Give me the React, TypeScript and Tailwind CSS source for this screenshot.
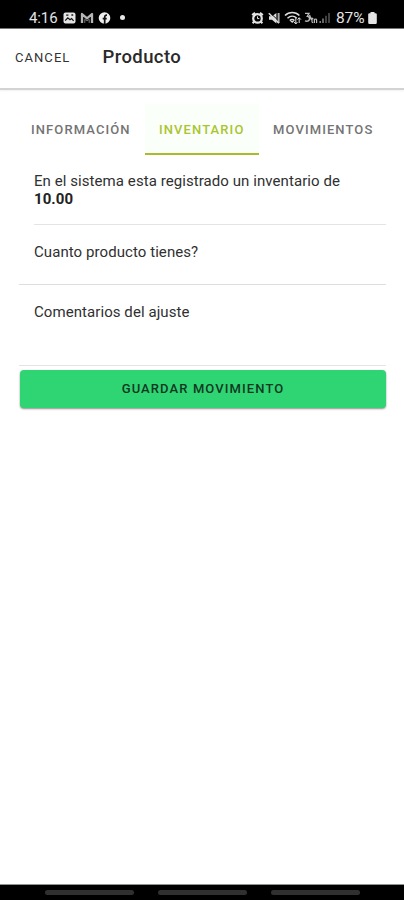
import React from "react";

function StatusBar() {
  return (
    <div className="flex h-[29px] shrink-0 items-start border-b border-[#777] bg-black pl-[29px] pr-[27px] pt-[8px] text-[#e4e4e4]">
      <span className="w-[30px] text-[15px] leading-[20px] tracking-[-0.1px]">4:16</span>
      <svg className="ml-[4px] mt-[4px]" width="13" height="12" viewBox="0 0 13 12">
        <rect x="0.5" y="0.5" width="12" height="11" rx="2" fill="#e4e4e4" />
        <path d="M2.2 8.6 4.8 5.8 7 7.8l1.6-1.3 2 2.3" fill="none" stroke="#111" strokeWidth="1.2" />
        <path d="M3.2 3.2h2.2M8.4 3h1.8" stroke="#111" strokeWidth="1.3" />
      </svg>
      <svg className="ml-[4px] mt-[4px]" width="14" height="12" viewBox="0 0 14 12">
        <path d="M2 11V2l5 4.3L12 2v9" fill="none" stroke="#b5b5b5" strokeWidth="2.3" strokeLinejoin="round" />
        <path d="M4.8 11V7.2L7 9l2.2-1.8V11" fill="none" stroke="#777" strokeWidth="1" />
      </svg>
      <svg className="ml-[4px] mt-[4px]" width="13" height="12" viewBox="0 0 13 12">
        <circle cx="6.5" cy="6" r="5.8" fill="#eee" />
        <path d="M6.7 12V5.2c0-1.5.7-2.2 2.3-2.1M4.7 6.7h4" fill="none" stroke="#111" strokeWidth="1.7" />
      </svg>
      <span className="ml-[9px] mt-[7px] h-[5px] w-[5px] rounded-full bg-[#e8e8e8]" />
      <div className="flex-1" />
      <svg className="mt-[4px]" width="13" height="12" viewBox="0 0 12 12">
        <circle cx="6" cy="6.4" r="4.3" fill="none" stroke="#e4e4e4" strokeWidth="2.2" />
        <path d="M.6 3 3.5.9M11.4 3 8.5.9M2.8 9.5l-1.7 1.8M9.2 9.5l1.7 1.8" stroke="#e4e4e4" strokeWidth="2" />
        <path d="M6 4.4v2.2h1.8" fill="none" stroke="#e4e4e4" strokeWidth="1" />
      </svg>
      <svg className="ml-[4px] mt-[4px]" width="13" height="12" viewBox="0 0 13 12">
        <path d="M1 4.3h3L8.4 1v10.5L4 7.7H1z" fill="#ddd" />
        <path d="M10.6 1v10" stroke="#aaa" strokeWidth="2" />
        <path d="M1.6.4 8.5 6.8" stroke="#000" strokeWidth="1" />
        <path d="M.8 1.2 11 11.2" stroke="#ddd" strokeWidth="1.5" />
      </svg>
      <svg className="ml-[3px] mt-[3px]" width="18" height="14" viewBox="0 0 18 14">
        <path d="M1 4.6C5 .5 11.4.5 15.4 4.6M3.5 7.2c2.8-2.6 6.6-2.6 9.3 0M5.8 9.6c1.4-1.3 3.3-1.3 4.6 0" fill="none" stroke="#ddd" strokeWidth="1.5" />
        <path d="m8.2 12-2-2h4z" fill="#ddd" />
        <path d="M11.8 7v6m-1.8-2 1.8 2 1.6-2M15.2 12V6.8m-1.7 1.8 1.7-1.8 1.7 1.8" fill="none" stroke="#ddd" strokeWidth="1" />
      </svg>
      <svg className="ml-[2px] mt-[4px]" width="14" height="12" viewBox="0 0 14 12">
        <path d="M1 1.4h4L3.3 4.3c2.8 0 3 4.3.2 4.9-1 .2-1.8 0-2.5-.5M5.5 3l2 5" fill="none" stroke="#bbb" strokeWidth="1.3" />
        <path d="M8 5.5v4q0 1.2 1.2 1.2M6.9 6.7h2.4M10.4 10.9V6.8M10.4 8q1.8-2 2.2 0v2.9" fill="none" stroke="#bbb" strokeWidth="1.2" />
      </svg>
      <svg className="ml-[1px] mt-[4px]" width="12" height="12" viewBox="0 0 12 12">
        <path d="M1.2 11V9M4 11V6.5" stroke="#888" strokeWidth="1.5" />
        <path d="M7 11V3.8M10 11V1" stroke="#555" strokeWidth="1.5" />
      </svg>
      <span className="ml-[5px] w-[32px] whitespace-nowrap text-[15.5px] leading-[20px] tracking-[-0.1px]">87%</span>
      <svg className="mt-[4px]" width="9" height="12" viewBox="0 0 9 12">
        <path d="M2.5 0h4v1.3H7.6q1.2 0 1.2 1.2v8.2q0 1.2-1.2 1.2H1.4Q.2 11.9.2 10.7V2.5q0-1.2 1.2-1.2h1.1z" fill="#e4e4e4" />
      </svg>
    </div>
  );
}

function Header() {
  return (
    <header className="flex h-[61px] shrink-0 items-center border-b-2 border-[#d3d3d3] pl-[15px] shadow-[0_1px_2px_rgba(0,0,0,0.06)]">
      <button className="w-[87.5px] pb-px text-left text-[13px] tracking-[1.05px] text-[#333]">CANCEL</button>
      <h1 className="pb-px text-[18.5px] font-medium tracking-[0.4px] text-[#2a2a2a]">Producto</h1>
    </header>
  );
}

function Tabs() {
  return (
    <nav className="mt-[14px] flex h-[51px] shrink-0 pl-[17px] text-[13px] font-medium text-[#747474]">
      <button className="w-[128px] whitespace-nowrap pl-[14px] text-left tracking-[1.1px]">INFORMACIÓN</button>
      <button className="w-[114px] whitespace-nowrap border-b-2 border-[#a9bd2c] bg-[#fbfffa] pl-[14px] pt-[2px] text-left tracking-[1.1px] text-[#a9c52f]">INVENTARIO</button>
      <button className="whitespace-nowrap pl-[14px] text-left tracking-[1.1px]">MOVIMIENTOS</button>
    </nav>
  );
}

export default function App() {
  return (
    <div className="flex h-[900px] w-[404px] flex-col overflow-hidden bg-white font-['Roboto',sans-serif]">
      <StatusBar />
      <Header />
      <Tabs />
      <main className="flex flex-1 flex-col pl-[19px] pr-[18px] text-[15px] leading-[18px] tracking-[0.07px] text-[#303030]">
        <div className="ml-[15px] h-[70px] border-b border-[#e4e4e4] pt-[17px]">
          <p className="whitespace-nowrap">En el sistema esta registrado un inventario de</p>
          <p className="font-bold text-[#222]">10.00</p>
        </div>
        <div className="h-[60px] border-b border-[#dedede] pl-[15px] pt-[18px]">Cuanto producto tienes?</div>
        <div className="h-[81px] border-b border-[#e4e4e4] pl-[15px] pt-[18px]">Comentarios del ajuste</div>
        <button className="ml-px mt-[4px] h-[38px] rounded-[4px] bg-[#2fd573] text-[13px] font-medium tracking-[1.1px] text-[#10381f] shadow-[0_1px_2px_rgba(0,0,0,0.45)]">
          GUARDAR MOVIMIENTO
        </button>
      </main>
      <footer className="flex h-[16px] shrink-0 gap-[24px] border-t border-[#8c9490] bg-black pl-[45px] pt-[5px]">
        <span className="h-[5px] w-[89px] rounded-full bg-[#303030]" />
        <span className="h-[5px] w-[89px] rounded-full bg-[#303030]" />
        <span className="h-[5px] w-[89px] rounded-full bg-[#303030]" />
      </footer>
    </div>
  );
}
